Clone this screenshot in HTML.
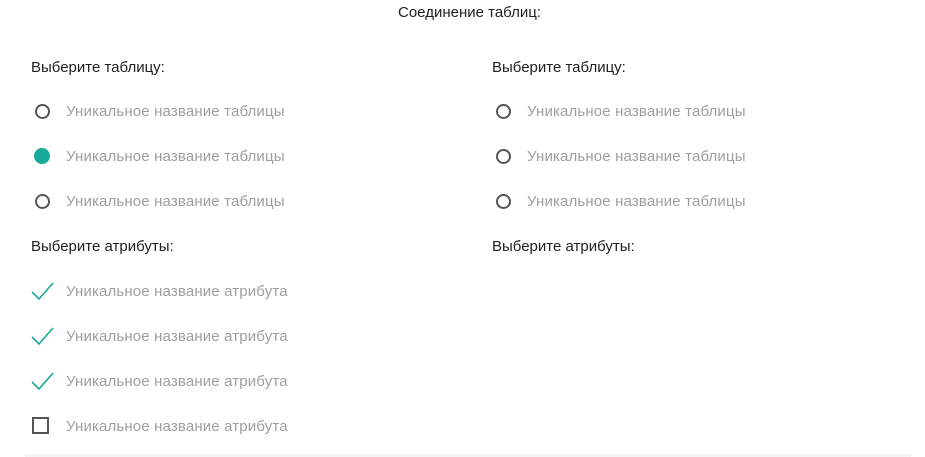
<!DOCTYPE html>
<html><head><meta charset="utf-8"><style>
body{margin:0;width:925px;height:457px;background:#fff;font-family:"Liberation Sans","DejaVu Sans",sans-serif;position:relative;overflow:hidden}
.t{position:absolute;font-size:15px;white-space:nowrap;line-height:16px;margin-top:1px}
.h{color:#212121}
.g{color:#9e9e9e;letter-spacing:0.15px}
.r{position:absolute;width:11px;height:11px;border:2px solid #555;border-radius:50%}
.f{position:absolute;width:16px;height:16px;border-radius:50%;background:#17a99a}
.cb{position:absolute;width:13px;height:13px;border:2px solid #555}
svg{position:absolute}
.line{position:absolute;left:25px;top:454px;width:886px;height:3px;background:#f5f5f5}
</style></head><body>
<div class="t h" style="left:398px;top:4px;font-size:15px">Соединение таблиц:</div>

<div class="t h" style="left:31px;top:59px">Выберите таблицу:</div>
<div class="t h" style="left:492px;top:59px">Выберите таблицу:</div>

<div class="r" style="left:35px;top:104px"></div><div class="t g" style="left:66px;top:103px">Уникальное название таблицы</div>
<div class="f" style="left:34px;top:148px"></div><div class="t g" style="left:66px;top:148px">Уникальное название таблицы</div>
<div class="r" style="left:35px;top:194px"></div><div class="t g" style="left:66px;top:193px">Уникальное название таблицы</div>

<div class="r" style="left:496px;top:104px"></div><div class="t g" style="left:527px;top:103px">Уникальное название таблицы</div>
<div class="r" style="left:496px;top:149px"></div><div class="t g" style="left:527px;top:148px">Уникальное название таблицы</div>
<div class="r" style="left:496px;top:194px"></div><div class="t g" style="left:527px;top:193px">Уникальное название таблицы</div>

<div class="t h" style="left:31px;top:238px">Выберите атрибуты:</div>
<div class="t h" style="left:492px;top:238px">Выберите атрибуты:</div>

<svg style="left:30px;top:281px" width="26" height="22"><path d="M2 11 L9 18 L23 2" fill="none" stroke="#17a99a" stroke-width="1.6"/></svg>
<div class="t g" style="left:66px;top:283px">Уникальное название атрибута</div>
<svg style="left:30px;top:326px" width="26" height="22"><path d="M2 11 L9 18 L23 2" fill="none" stroke="#17a99a" stroke-width="1.6"/></svg>
<div class="t g" style="left:66px;top:328px">Уникальное название атрибута</div>
<svg style="left:30px;top:371px" width="26" height="22"><path d="M2 11 L9 18 L23 2" fill="none" stroke="#17a99a" stroke-width="1.6"/></svg>
<div class="t g" style="left:66px;top:373px">Уникальное название атрибута</div>
<div class="cb" style="left:32px;top:417px"></div>
<div class="t g" style="left:66px;top:418px">Уникальное название атрибута</div>
<div class="line"></div>
</body></html>
